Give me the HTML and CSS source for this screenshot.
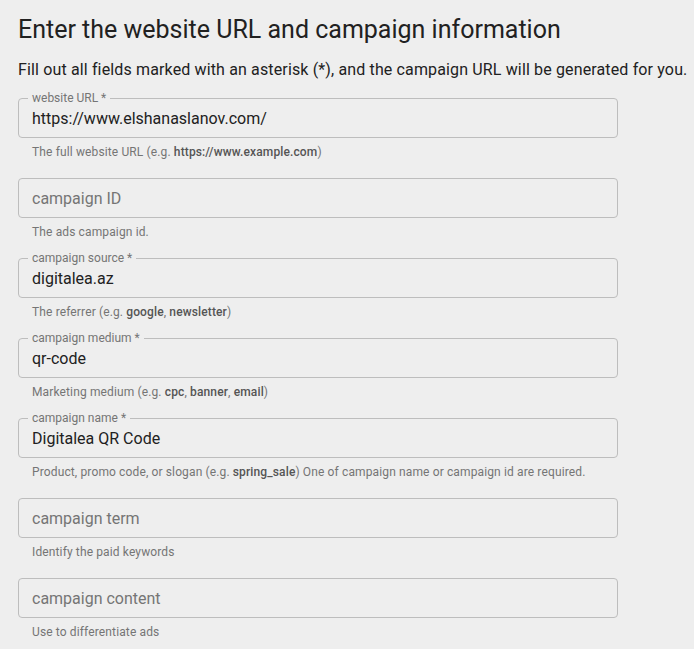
FILE: index.html
```html
<!DOCTYPE html>
<html lang="en">
<head>
  <title>Campaign URL Builder</title>
  <link rel="stylesheet" href="styles.css">
</head>
<body>

  <div class="container">
    <h1>Enter the website URL and campaign information</h1>
    <p class="intro">Fill out all fields marked with an asterisk (*), and the campaign URL will be generated for you.</p>

    <form class="fields">
      <div class="field">
        <div class="box">
          <label for="url">website URL *</label>
          <input type="text" id="url" value="https://www.elshanaslanov.com/" />
        </div>
        <p class="hint">The full website URL (e.g. <b>https://www.example.com</b>)</p>
      </div>

      <div class="field">
        <div class="box">
          <input type="text" id="cid" placeholder="campaign ID" />
        </div>
        <p class="hint">The ads campaign id.</p>
      </div>

      <div class="field">
        <div class="box">
          <label for="source">campaign source *</label>
          <input type="text" id="source" value="digitalea.az" />
        </div>
        <p class="hint">The referrer (e.g. <b>google</b>, <b>newsletter</b>)</p>
      </div>

      <div class="field">
        <div class="box">
          <label for="medium">campaign medium *</label>
          <input type="text" id="medium" value="qr-code" />
        </div>
        <p class="hint">Marketing medium (e.g. <b>cpc</b>, <b>banner</b>, <b>email</b>)</p>
      </div>

      <div class="field">
        <div class="box">
          <label for="name">campaign name *</label>
          <input type="text" id="name" value="Digitalea QR Code" />
        </div>
        <p class="hint">Product, promo code, or slogan (e.g. <b>spring_sale</b>) One of campaign name or campaign id are required.</p>
      </div>

      <div class="field">
        <div class="box">
          <input type="text" id="term" placeholder="campaign term" />
        </div>
        <p class="hint">Identify the paid keywords</p>
      </div>

      <div class="field">
        <div class="box">
          <input type="text" id="content" placeholder="campaign content" />
        </div>
        <p class="hint">Use to differentiate ads</p>
      </div>
    </form>
  </div>

</body>
</html>
```

FILE: styles.css
```css
* {
  box-sizing: border-box;
  margin: 0;
  padding: 0;
}

body {
  font-family: Roboto, "Noto Sans", sans-serif;
  background: #eeeeee;
  color: #212121;
}

.container {
  padding: 12px 0 0 18px;
}

h1 {
  font-size: 25px;
  font-weight: 400;
  line-height: 36px;
  color: #212121;
}

.intro {
  font-size: 16px;
  line-height: 24px;
  margin-top: 10px;
  letter-spacing: 0.14px;
  color: #212121;
}

.fields {
  margin-top: 16px;
}

.field {
  width: 600px;
  margin-bottom: 18px;
}

.box {
  position: relative;
  height: 40px;
  border: 1px solid #bdbdbd;
  border-radius: 4px;
}

.box label {
  position: absolute;
  top: -8px;
  left: 9px;
  padding: 0 4px;
  background: #eeeeee;
  font-size: 12px;
  line-height: 14px;
  color: #757575;
}

.box input {
  width: 100%;
  height: 100%;
  border: none;
  outline: none;
  background: transparent;
  padding: 0 13px;
  font-family: inherit;
  font-size: 16px;
  color: #212121;
}

.box input::placeholder {
  color: #757575;
}

.hint {
  margin-top: 6px;
  padding-left: 14px;
  font-size: 12px;
  line-height: 16px;
  letter-spacing: 0.13px;
  color: #757575;
}

.hint b {
  font-weight: 500;
  color: #555555;
}
```
